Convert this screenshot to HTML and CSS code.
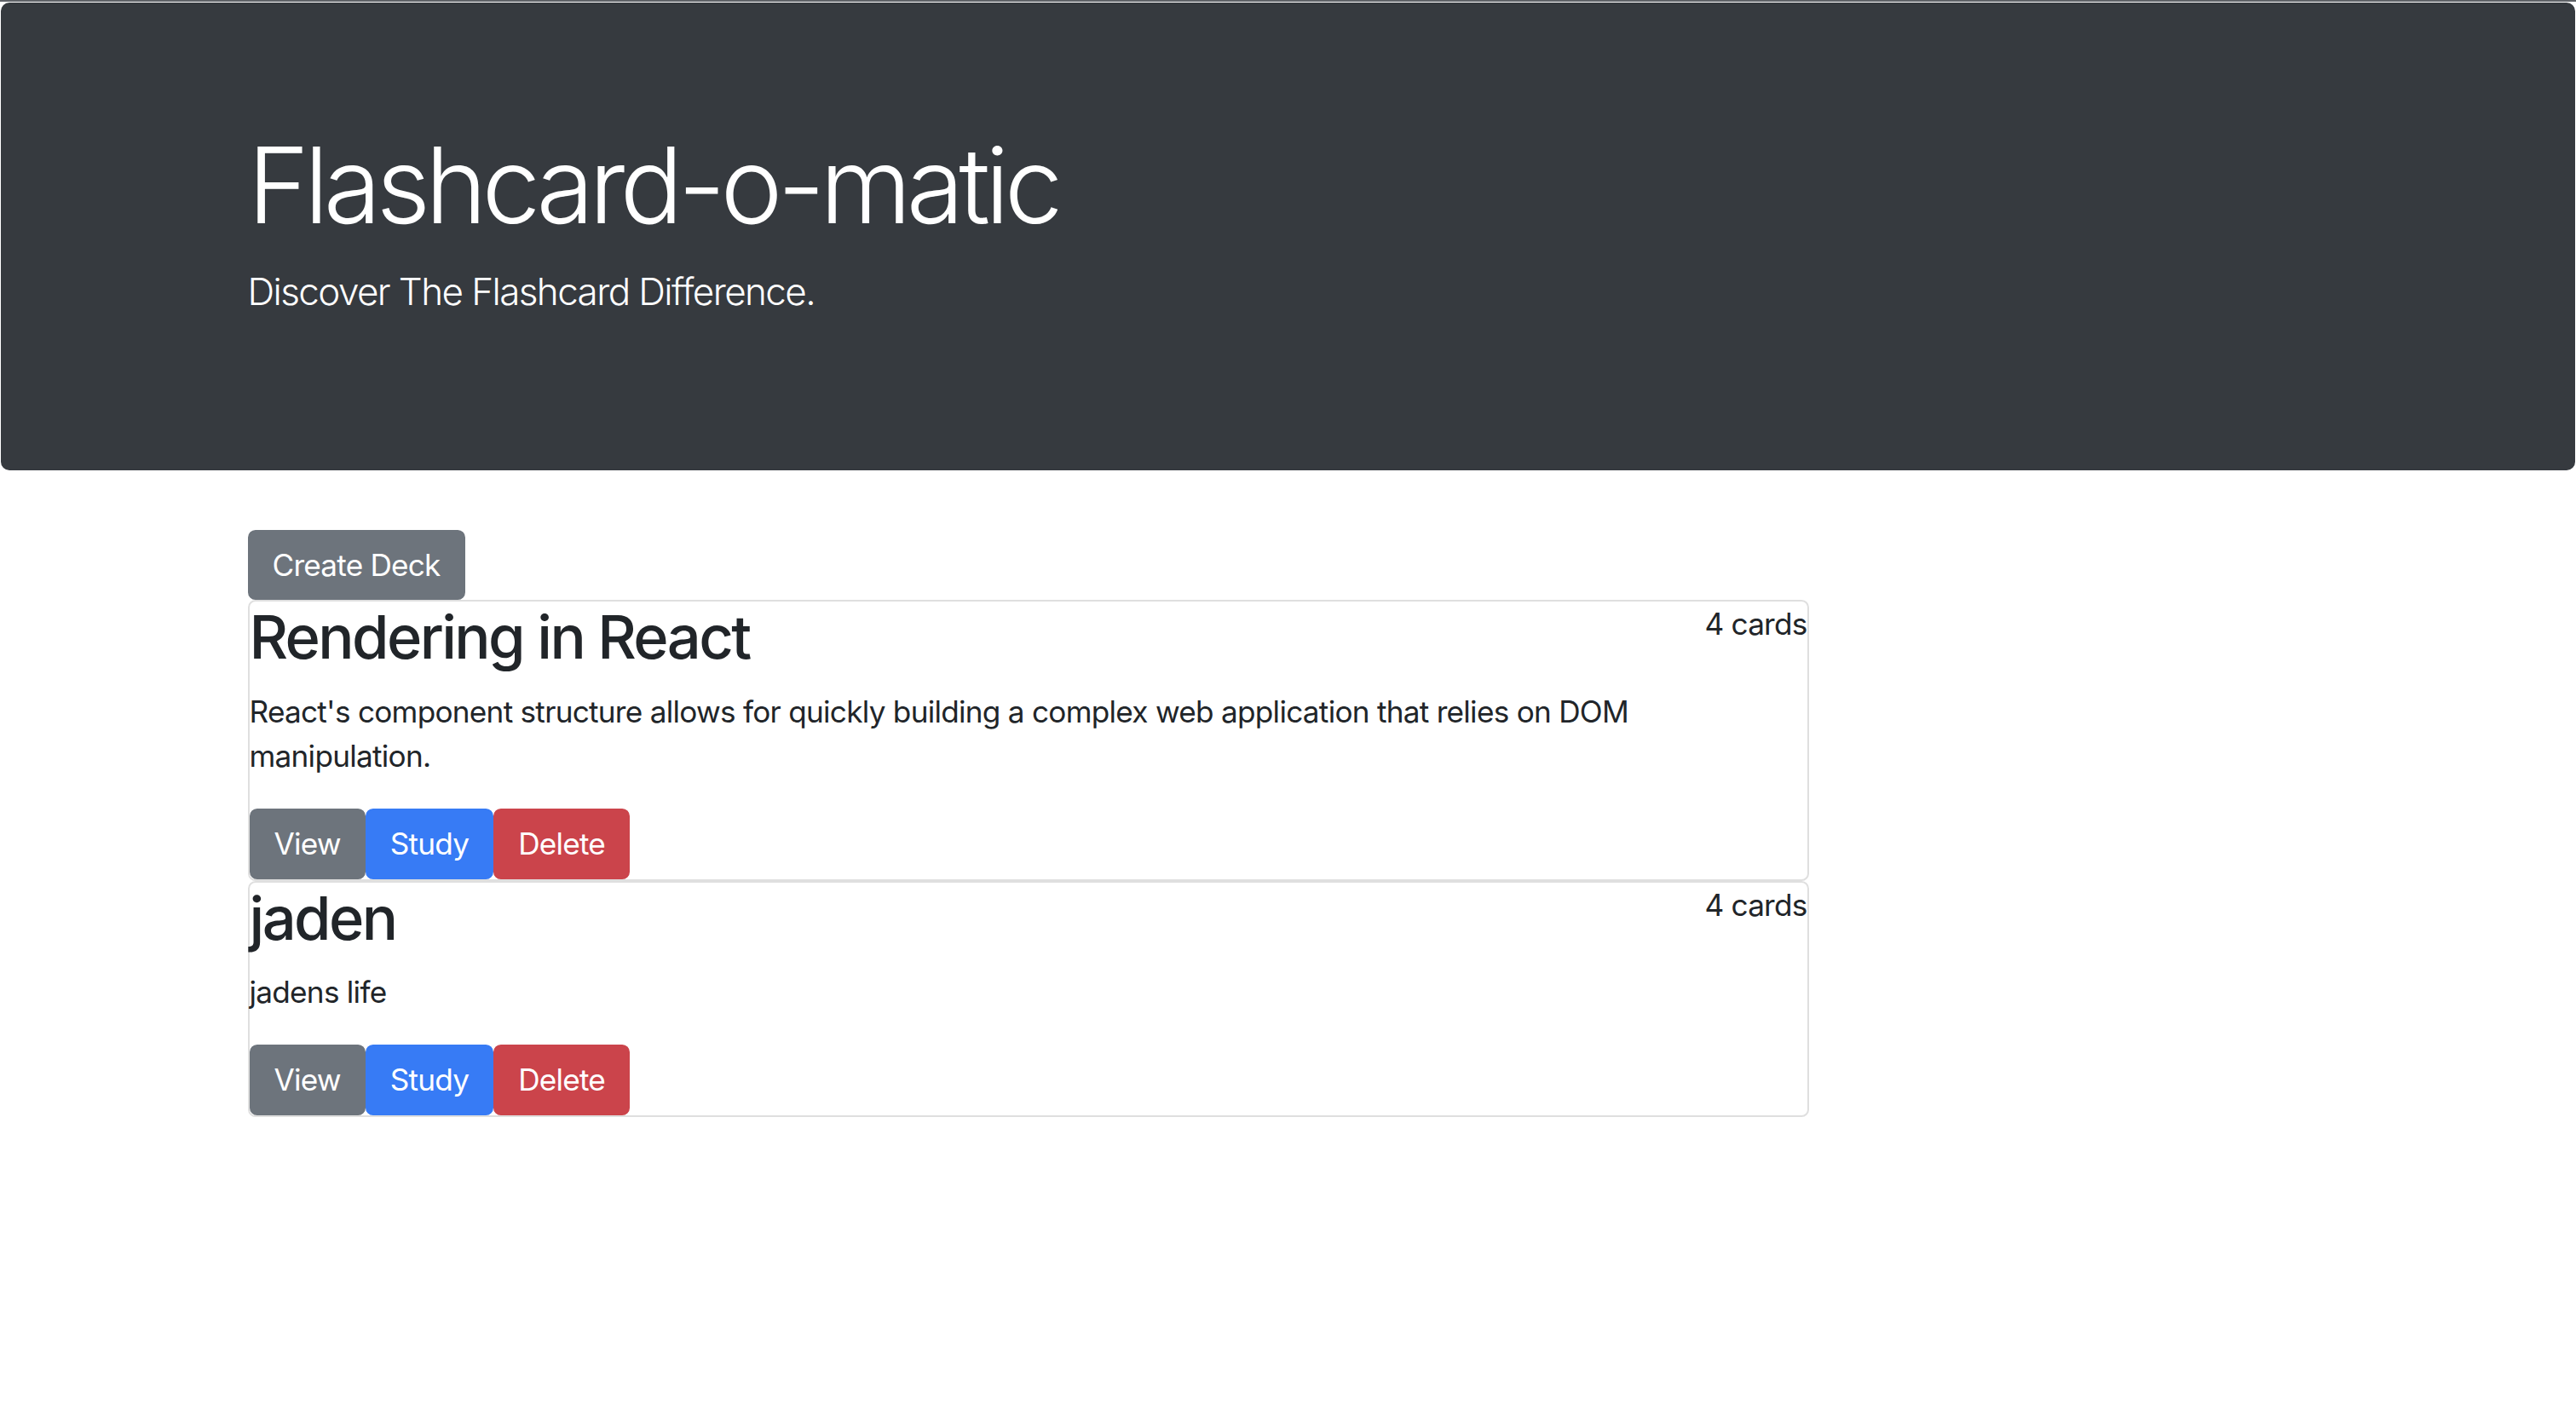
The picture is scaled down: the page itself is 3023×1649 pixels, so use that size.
FILE: index.html
```html
<!DOCTYPE html>
<html lang="en">
<head>
<meta charset="utf-8">
<title>Flashcard-o-matic</title>
<link rel="stylesheet" href="styles.css">
</head>
<body>
<header class="jumbotron">
  <div class="container">
    <h1 class="display">Flashcard-o-matic</h1>
    <p class="lead">Discover The Flashcard Difference.</p>
  </div>
</header>
<main class="container">
  <button class="btn btn-secondary">Create Deck</button>
  <div class="decks">
    <article class="deck">
      <div class="deck-head">
        <h2 class="deck-title">Rendering in React</h2>
        <span class="deck-count">4 cards</span>
      </div>
      <p class="deck-desc">React's component structure allows for quickly building a complex web application that relies on DOM manipulation.</p>
      <div class="deck-actions">
        <button class="btn btn-secondary">View</button>
        <button class="btn btn-primary">Study</button>
        <button class="btn btn-danger">Delete</button>
      </div>
    </article>
    <article class="deck">
      <div class="deck-head">
        <h2 class="deck-title">jaden</h2>
        <span class="deck-count">4 cards</span>
      </div>
      <p class="deck-desc">jadens life</p>
      <div class="deck-actions">
        <button class="btn btn-secondary">View</button>
        <button class="btn btn-primary">Study</button>
        <button class="btn btn-danger">Delete</button>
      </div>
    </article>
  </div>
</main>
</body>
</html>
```

FILE: styles.css
```css
* { box-sizing: border-box; }

html, body {
  margin: 0;
  background: #ffffff;
}

body {
  font-family: Inter, "Liberation Sans", sans-serif;
  font-size: 35.2px;
  line-height: 1.5;
  color: #212529;
  border-top: 2px solid #5f6267;
}

.container {
  width: 2508px;
  margin: 0 auto;
  padding: 0 33px;
}

.jumbotron {
  background: #363a3f;
  color: #ffffff;
  margin: 1px 1px 70px 1px;
  padding: 141px 0;
  border-radius: 10px;
}

.display {
  margin: 0 0 17.6px 0;
  font-size: 123.2px;
  font-weight: 300;
  line-height: 1.2;
  letter-spacing: -6px;
}

.lead {
  margin: 0 0 35.2px 0;
  font-size: 44px;
  font-weight: 300;
  line-height: 1.5;
  letter-spacing: -1.6px;
}

.btn {
  display: inline-block;
  font-family: inherit;
  font-size: 35.2px;
  line-height: 1.5;
  font-weight: 400;
  color: #ffffff;
  padding: 13px 27px;
  border: 2px solid transparent;
  border-radius: 8.8px;
  cursor: pointer;
  letter-spacing: -0.8px;
}

.btn-secondary { background: #6d747c; border-color: #6d747c; }
.btn-primary { background: #377bf5; border-color: #377bf5; }
.btn-danger { background: #cb444b; border-color: #cb444b; }

.decks {
  width: 1832px;
}

.deck {
  border: 2px solid #dfdfdf;
  border-radius: 8.8px;
}

.deck-head {
  display: flex;
  justify-content: space-between;
  align-items: flex-start;
}

.deck-title {
  margin: 0 0 17.6px 0;
  font-size: 70.4px;
  font-weight: 500;
  line-height: 1.2;
  letter-spacing: -2.6px;
}

.deck-count {
  font-size: 35.2px;
  line-height: 1.5;
  letter-spacing: -0.8px;
}

.deck-desc {
  margin: 0 0 35.2px 0;
  letter-spacing: -0.75px;
}

.deck-actions {
  display: flex;
}
```
